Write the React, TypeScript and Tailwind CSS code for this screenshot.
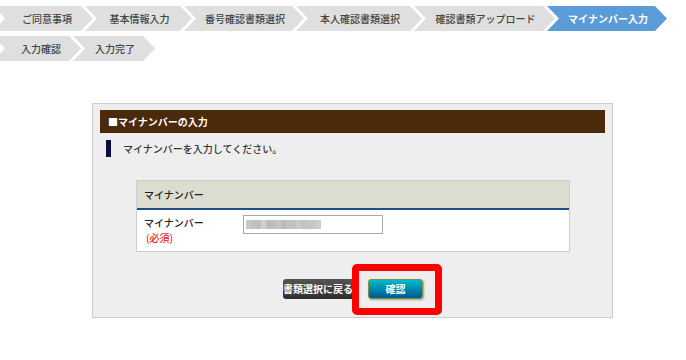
import React from "react";

const clip =
  "[clip-path:polygon(0_0,calc(100%-12px)_0,100%_50%,calc(100%-12px)_100%,0_100%,12px_50%)]";

type Step = { label: string; w: string; active?: boolean; first?: boolean };

const row1: Step[] = [
  { label: "ご同意事項", w: "w-[100px]", first: true },
  { label: "基本情報入力", w: "w-[107px]" },
  { label: "番号確認書類選択", w: "w-[120px]" },
  { label: "本人確認書類選択", w: "w-[126px]" },
  { label: "確認書類アップロード", w: "w-[141px]" },
  { label: "マイナンバー入力", w: "w-[120px]", active: true },
];
const row2: Step[] = [
  { label: "入力確認", w: "w-[88px]", first: true },
  { label: "入力完了", w: "w-[82px]" },
];

function StepItem({ s }: { s: Step }) {
  return (
    <div
      className={`${s.w} ${clip} h-[25px] shrink-0 flex items-center justify-center text-[10px] leading-none whitespace-nowrap ${
        s.first ? "ml-[-7px] pl-[8px]" : "ml-[-8px] pl-[2px]"
      } ${s.active ? "bg-[#5b9bd8] text-white font-bold" : "bg-[#dfdfdf] text-[#444] font-medium"}`}
    >
      {s.label}
    </div>
  );
}

const blur = [
  "#c9c9c9", "#b9c3c9", "#c4bcc0", "#cfcfcf", "#b7bdc4", "#c8b9bd",
  "#c2c6c9", "#bcbcbc", "#c6c1c3", "#b9c2c7", "#cacaca", "#bec4c0",
  "#c9c4c6", "#c2c7ca", "#cdcdcd",
];

export default function App() {
  return (
    <div className="relative w-[686px] h-[360px] bg-white overflow-hidden font-['Noto_Sans_CJK_JP','Noto_Sans',sans-serif]">
      <div className="pt-[6px] flex flex-col gap-[5px]">
        <div className="flex">
          {row1.map((s) => (
            <StepItem key={s.label} s={s} />
          ))}
        </div>
        <div className="flex">
          {row2.map((s) => (
            <StepItem key={s.label} s={s} />
          ))}
        </div>
      </div>

      <div className="mt-[42px] ml-[92px] w-[521px] border border-[#cccccc] bg-[#eeeeee] px-[7px] pt-[6px] pb-[18px]">
        <div className="h-[23px] bg-[#4a2a0a] flex items-center pl-[8px] text-white font-bold text-[10px] leading-none">
          ■マイナンバーの入力
        </div>
        <div className="mt-[7px] h-[17px] flex items-center">
          <div className="ml-[6px] w-[5px] h-[17px] bg-[#0b0b3f]" />
          <div className="ml-[12px] text-[10px] leading-none text-[#333] font-medium">
            マイナンバーを入力してください。
          </div>
        </div>

        <div className="mt-[23px] ml-[36px] w-[434px] border border-[#cccccc] bg-white">
          <div className="h-[29px] bg-[#dcdcd0] border-b-2 border-[#1f4f8a] flex items-center pl-[7px] text-[10px] leading-none text-[#222] font-medium">
            マイナンバー
          </div>
          <div className="h-[41px] flex">
            <div className="w-[106px] pl-[7px] pt-[5px] text-[10px] leading-[15px] text-[#222] font-medium">
              <div>マイナンバー</div>
              <div className="text-[#e8272b] pl-[2px]">(必須)</div>
            </div>
            <div className="pt-[5px]">
              <div className="w-[140px] h-[19px] border border-[#a9a9a9] bg-white flex items-center pl-[2px]">
                <div className="flex h-[9px]">
                  {blur.map((c, i) => (
                    <div key={i} className="w-[5px] h-[9px]" style={{ backgroundColor: c }} />
                  ))}
                </div>
              </div>
            </div>
          </div>
        </div>

        <div className="mt-[27px] flex justify-center gap-[9px] pl-[1px]">
          <div className="w-[76px] h-[20px] rounded-[3px] bg-gradient-to-b from-[#555555] to-[#2e2e2e] text-white font-bold text-[10px] leading-none flex items-center justify-start whitespace-nowrap overflow-hidden">
            書類選択に戻る
          </div>
          <div className="w-[55px] h-[20px] rounded-[3px] border border-[#7b8f3c] bg-gradient-to-b from-[#00bccb] to-[#00588f] text-white font-bold text-[10px] leading-none flex items-center justify-center shadow-[1px_1px_2px_rgba(0,0,0,0.35)]">
            確認
          </div>
        </div>
      </div>

      <div className="absolute left-[352px] top-[264px] w-[90px] h-[51px] border-[7px] border-[#ff0000] rounded-[5px]" />
    </div>
  );
}
